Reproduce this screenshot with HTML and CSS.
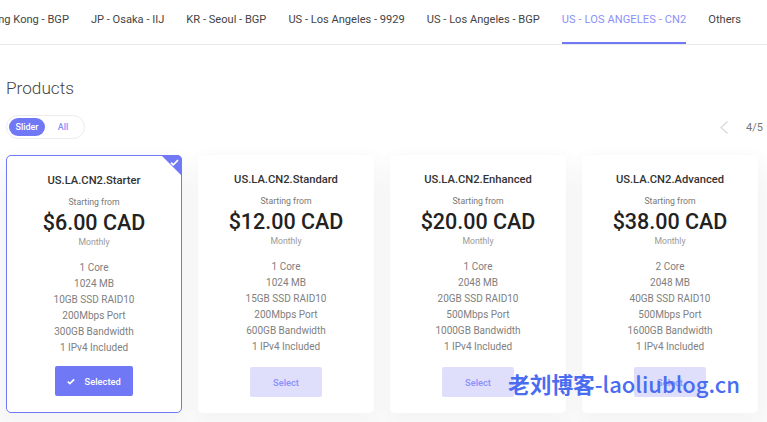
FILE: index.html
```html
<!DOCTYPE html>
<html lang="en">
<head>
    <meta charset="UTF-8">
    <meta name="viewport" content="width=device-width, initial-scale=1.0">
    <title>Products</title>
    <link rel="stylesheet" href="styles.css">
</head>
<body>
    <nav class="tabs">
        <a class="tab tab-first">Hong Kong - BGP</a>
        <a class="tab">JP - Osaka - IIJ</a>
        <a class="tab">KR - Seoul - BGP</a>
        <a class="tab">US - Los Angeles - 9929</a>
        <a class="tab">US - Los Angeles - BGP</a>
        <a class="tab active">US - LOS ANGELES - CN2</a>
        <a class="tab">Others</a>
    </nav>

    <main class="content">
        <h2 class="title">Products</h2>
        <div class="toolbar">
            <div class="switch">
                <span class="switch-item on">Slider</span>
                <span class="switch-item">All</span>
            </div>
            <div class="pager">
                <svg class="pager-arrow" width="8" height="13" viewBox="0 0 8 13"><path d="M7.5 .5 L1 6.5 L7.5 12.5" fill="none" stroke="#dcdcdc" stroke-width="1.4"/></svg>
                <span>4/5</span>
            </div>
        </div>

        <div class="cards">
            <div class="card selected">
                <span class="corner"></span>
                <svg class="corner-check" width="9" height="7" viewBox="0 0 10 8"><path d="M1 4.2 L3.6 6.6 L9 1.2" fill="none" stroke="#fff" stroke-width="2"/></svg>
                <h3 class="card-name">US.LA.CN2.Starter</h3>
                <div class="from">Starting from</div>
                <div class="price">$6.00 CAD</div>
                <div class="cycle">Monthly</div>
                <ul class="specs">
                    <li>1 Core</li>
                    <li>1024 MB</li>
                    <li>10GB SSD RAID10</li>
                    <li>200Mbps Port</li>
                    <li>300GB Bandwidth</li>
                    <li>1 IPv4 Included</li>
                </ul>
                <button class="btn btn-on">
                    <svg width="8" height="7" viewBox="0 0 10 8"><path d="M1 4.2 L3.6 6.6 L9 1.2" fill="none" stroke="#fff" stroke-width="2.2"/></svg>
                    Selected
                </button>
            </div>
            <div class="card">
                <h3 class="card-name">US.LA.CN2.Standard</h3>
                <div class="from">Starting from</div>
                <div class="price">$12.00 CAD</div>
                <div class="cycle">Monthly</div>
                <ul class="specs">
                    <li>1 Core</li>
                    <li>1024 MB</li>
                    <li>15GB SSD RAID10</li>
                    <li>200Mbps Port</li>
                    <li>600GB Bandwidth</li>
                    <li>1 IPv4 Included</li>
                </ul>
                <button class="btn">Select</button>
            </div>
            <div class="card">
                <h3 class="card-name">US.LA.CN2.Enhanced</h3>
                <div class="from">Starting from</div>
                <div class="price">$20.00 CAD</div>
                <div class="cycle">Monthly</div>
                <ul class="specs">
                    <li>1 Core</li>
                    <li>2048 MB</li>
                    <li>20GB SSD RAID10</li>
                    <li>500Mbps Port</li>
                    <li>1000GB Bandwidth</li>
                    <li>1 IPv4 Included</li>
                </ul>
                <button class="btn">Select</button>
            </div>
            <div class="card">
                <h3 class="card-name">US.LA.CN2.Advanced</h3>
                <div class="from">Starting from</div>
                <div class="price">$38.00 CAD</div>
                <div class="cycle">Monthly</div>
                <ul class="specs">
                    <li>2 Core</li>
                    <li>2048 MB</li>
                    <li>40GB SSD RAID10</li>
                    <li>500Mbps Port</li>
                    <li>1600GB Bandwidth</li>
                    <li>1 IPv4 Included</li>
                </ul>
                <button class="btn">Select</button>
            </div>
        </div>
    </main>

    <div class="watermark"><b class="watermark-cn">老刘博客</b>-laoliublog.cn</div>
</body>
</html>
```

FILE: styles.css
```css
html, body { height: 100%; }
body { margin: 0; overflow: hidden; background: #fff; font-family: Roboto, "Liberation Sans", sans-serif; color: #333; }

.tabs { display: flex; gap: 22px; height: 44px; border-bottom: 1px solid #e8e8e8; white-space: nowrap; }
.tab { display: block; height: 42px; line-height: 40px; font-size: 11.1px; color: #444; flex: none; }
.tab-first { margin-left: -16px; }
.tab.active { color: #8c8ffb; border-bottom: 2px solid #7078f5; letter-spacing: 0.08px; }

.content { padding: 0 6px; background: linear-gradient(#fff 100px, #f9f9f9 150px); height: 378px; }
.title { margin: 0; padding-top: 31px; font-size: 17.2px; font-weight: 300; line-height: 24px; color: #444; }

.toolbar { display: flex; justify-content: space-between; align-items: center; margin-top: 15px; height: 24px; }
.switch { display: flex; align-items: center; width: 73px; height: 22px; padding: 0 2px; border: 1px solid #ececec; border-radius: 12px; background: #fff; }
.switch-item { width: 36px; height: 18px; line-height: 18px; text-align: center; font-size: 9px; font-weight: 500; color: #8c8ffb; border-radius: 9px; }
.switch-item.on { background: #7078f5; color: #fff; }
.pager { display: flex; align-items: center; gap: 18px; font-size: 11px; color: #777; margin-right: -2px; }

.cards { display: flex; gap: 16px; margin-top: 16px; }
.card { position: relative; flex: none; width: 176px; height: 258px; box-sizing: border-box; padding-top: 18px; background: #fff; border-radius: 5px; text-align: center; box-shadow: 0 4px 20px rgba(0, 0, 0, 0.03); }
.card.selected { border: 1px solid #7078f5; }
.corner { position: absolute; top: -1px; right: -1px; width: 0; height: 0; border-top: 21px solid #7078f5; border-left: 21px solid transparent; border-top-right-radius: 5px; }
.corner-check { position: absolute; top: 3px; right: 2px; }

.card-name { margin: 0; font-size: 11.2px; line-height: 14px; font-weight: 500; color: #333; }
.from { margin-top: 7px; font-size: 8.7px; line-height: 14px; color: #777; }
.price { font-size: 21.5px; line-height: 28px; font-weight: 500; color: #222; }
.cycle { margin-top: -2px; font-size: 8.7px; line-height: 14px; color: #999; }
.specs { list-style: none; margin: 11px 0 0; padding: 0; font-size: 10px; line-height: 16px; color: #808080; }

.btn { display: block; width: 72px; height: 30px; margin: 12px auto 0; padding: 0; border: 0; border-radius: 2px; background: #dfdffb; color: #8c8ffb; font-family: inherit; font-size: 9.3px; font-weight: 500; }
.btn-on { width: 78px; margin-top: 10px; background: #7078f5; color: #fff; }
.btn-on svg { margin-right: 7px; }

.watermark { position: absolute; left: 508px; top: 369px; font-family: "Noto Sans CJK SC", Roboto, sans-serif; font-size: 22px; line-height: 28px; font-weight: 500; color: #4a6cf0; white-space: nowrap; }
.watermark-cn { font-size: 21.7px; font-weight: 700; }
```
